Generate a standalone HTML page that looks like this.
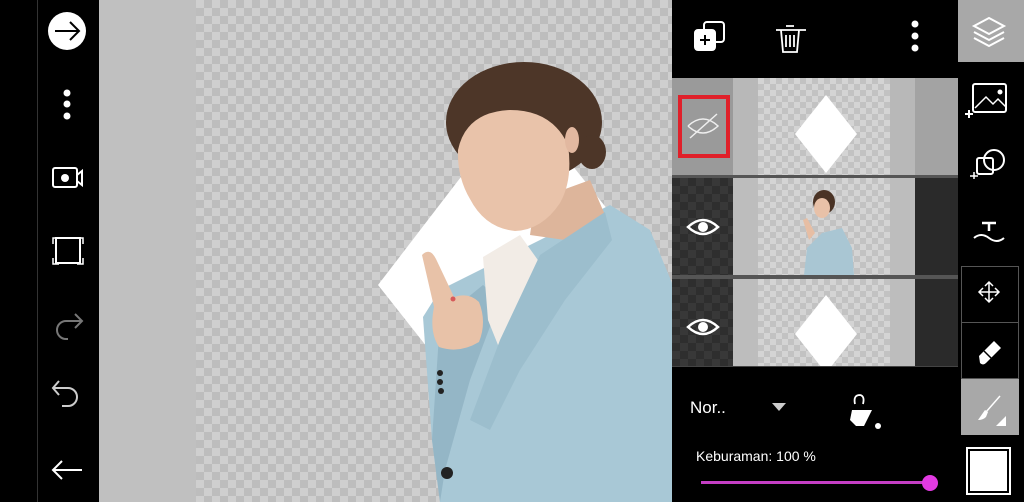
<!DOCTYPE html>
<html><head><meta charset="utf-8"><style>
*{margin:0;padding:0;box-sizing:border-box}
body{width:1024px;height:502px;background:#000;position:relative;overflow:hidden;font-family:"Liberation Sans",sans-serif}
.a{position:absolute}
.chk{background-color:#cfcfcf;background-image:linear-gradient(45deg,#bdbdbd 25%,transparent 25%,transparent 75%,#bdbdbd 75%),linear-gradient(45deg,#bdbdbd 25%,transparent 25%,transparent 75%,#bdbdbd 75%);background-size:16px 16px;background-position:0 0,8px 8px}
.chks{background-color:#d4d4d4;background-image:linear-gradient(45deg,#c2c2c2 25%,transparent 25%,transparent 75%,#c2c2c2 75%),linear-gradient(45deg,#c2c2c2 25%,transparent 25%,transparent 75%,#c2c2c2 75%);background-size:12px 12px;background-position:0 0,6px 6px}
.dchk{background-color:#2e2e2e;background-image:linear-gradient(45deg,#383838 25%,transparent 25%,transparent 75%,#383838 75%),linear-gradient(45deg,#383838 25%,transparent 25%,transparent 75%,#383838 75%);background-size:16px 16px;background-position:0 0,8px 8px}
svg{position:absolute}
</style></head><body>
<div class="a" style="left:37px;top:0;width:1px;height:502px;background:#333"></div>
<svg style="left:0;top:0" width="100" height="502" fill="none" stroke="#fff" stroke-width="2">
<circle cx="67" cy="31" r="19" fill="#fff" stroke="none"/>
<path d="M55 31H79M70 22l9 9-9 9" stroke="#000"/>
<g fill="#fff" stroke="none"><circle cx="67" cy="93" r="3.5"/><circle cx="67" cy="104" r="3.5"/><circle cx="67" cy="116" r="3.5"/></g>
<rect x="53" y="168" width="24" height="19" rx="2"/><circle cx="65" cy="178" r="4" fill="#fff" stroke="none"/><path d="M77 175l5-4v14l-5-4"/>
<rect x="56" y="238" width="24" height="25"/><path d="M53 244v-6h6M77 238h6v6M53 258v6h6M83 258v6h-6" stroke-width="1.5"/>
<path d="M81 321H66a9 9 0 0 0 0 18h2M75 314l7 7-7 7" stroke="#777"/>
<path d="M53 388H68a9 9 0 0 1 0 18h-6M59 381l-6 7 6 7" stroke="#ccc"/>
<path d="M82 470H54M62 461l-9 9 9 9"/>
</svg>
<div class="a" style="left:99px;top:0;width:97px;height:502px;background:#c0c0c0"></div>
<div class="a chk" style="left:196px;top:0;width:476px;height:502px"></div>
<svg style="left:0;top:0" width="672" height="502">
<polygon points="378,285 520,100 672,290 672,330 427,347" fill="#fff"/>
<polygon points="423,317 440,290 500,260 560,230 610,205 650,230 672,283 672,502 440,502 432,440" fill="#a8c8d6"/>
<polygon points="440,320 483,285 500,300 470,380 445,470 440,502 432,440" fill="#94b6c6"/>
<polygon points="535,200 590,180 605,215 565,240 530,235" fill="#ddb59b"/>
<polygon points="483,257 520,235 545,270 500,350 488,320" fill="#f2ece6"/>
<polygon points="540,255 605,212 612,240 565,300 520,370 490,430 470,420 500,340" fill="#9cbecd"/>
<ellipse cx="524" cy="122" rx="78" ry="60" fill="#4d3628"/>
<ellipse cx="592" cy="152" rx="14" ry="17" fill="#4d3628"/>
<path d="M458 150q8-38 52-40q42 0 58 35q5 35-8 58q-18 27-45 28q-30-3-45-32q-13-22-12-49z" fill="#e9c3aa"/>
<ellipse cx="572" cy="140" rx="7" ry="13" fill="#e2b8a0"/>
<path d="M422 255q8-8 14 4l18 38q15-5 25 5q8 20 0 40q-20 12-40 5q-10-15-5-40z" fill="#e8c2a8"/>
<circle cx="453" cy="299" r="2.5" fill="#d65a5a"/>
<g fill="#222"><circle cx="440" cy="373" r="3"/><circle cx="440" cy="382" r="3"/><circle cx="441" cy="391" r="3"/><ellipse cx="447" cy="473" rx="6" ry="6"/></g>
</svg>
<svg style="left:672px;top:0" width="286" height="78" fill="none" stroke="#fff" stroke-width="2">
<rect x="32" y="22" width="20" height="20" rx="3"/>
<rect x="23" y="30" width="20" height="20" rx="3" fill="#fff"/><path d="M33 35v10M28 40h10" stroke="#000"/>
<path d="M104 30h30M109 30l2 22h14l2-22M114 26h8M114 35v12M118 35v12M122 35v12" stroke-width="1.8"/>
<g fill="#fff" stroke="none"><circle cx="243" cy="24" r="3.5"/><circle cx="243" cy="36" r="3.5"/><circle cx="243" cy="48" r="3.5"/></g>
</svg>
<div class="a" style="left:672px;top:78px;width:286px;height:97px;background:#b8b8b8"></div>
<div class="a" style="left:672px;top:78px;width:61px;height:97px;background:#9a9a9a"></div>
<div class="a chks" style="left:758px;top:78px;width:132px;height:97px"></div>
<div class="a" style="left:915px;top:78px;width:43px;height:97px;background:#a3a3a3"></div>
<div class="a" style="left:678px;top:95px;width:52px;height:63px;border:4px solid #e0202a"></div>
<svg style="left:672px;top:78px" width="286" height="97"><path d="M16 48q15-14 30 0q-15 14-30 0M18 60l27-24" stroke="#eee" stroke-width="1.5" fill="none"/><polygon points="154,17 185,56 154,95 123,56" fill="#fff"/></svg>
<div class="a" style="left:672px;top:175px;width:286px;height:3px;background:#555"></div>
<div class="a dchk" style="left:672px;top:178px;width:61px;height:97px"></div>
<div class="a" style="left:733px;top:178px;width:182px;height:97px;background:#bdbdbd"></div>
<div class="a chks" style="left:758px;top:178px;width:132px;height:97px"></div>
<div class="a" style="left:915px;top:178px;width:43px;height:97px;background:#2a2a2a"></div>
<svg style="left:672px;top:178px" width="286" height="97">
<path d="M16 49q15-14 30 0q-15 14-30 0z" fill="none" stroke="#fff" stroke-width="2.5"/><circle cx="31" cy="49" r="5" fill="#fff"/>
<polygon points="132,97 135,70 150,55 170,50 180,70 182,97" fill="#a9c6d3"/><ellipse cx="152" cy="24" rx="11" ry="12" fill="#4a3325"/><ellipse cx="150" cy="30" rx="8" ry="10" fill="#e8c1a8"/><polygon points="131,42 135,40 143,55 137,62" fill="#e7bea4"/>
</svg>
<div class="a" style="left:672px;top:275px;width:286px;height:4px;background:#555"></div>
<div class="a dchk" style="left:672px;top:279px;width:61px;height:87px"></div>
<div class="a" style="left:733px;top:279px;width:182px;height:87px;background:#bdbdbd"></div>
<div class="a chks" style="left:758px;top:279px;width:132px;height:87px"></div>
<div class="a" style="left:915px;top:279px;width:43px;height:87px;background:#2a2a2a"></div>
<svg style="left:672px;top:279px" width="286" height="87">
<path d="M16 48q15-14 30 0q-15 14-30 0z" fill="none" stroke="#fff" stroke-width="2.5"/><circle cx="31" cy="48" r="5" fill="#fff"/>
<polygon points="154,16 185,55 154,94 123,55" fill="#fff"/></svg>
<div class="a" style="left:672px;top:366px;width:286px;height:1px;background:#444"></div>
<div class="a" style="left:690px;top:398px;color:#fff;font-size:17px">Nor..</div>
<svg style="left:672px;top:380px" width="286" height="122">
<polygon points="100,23 114,23 107,31" fill="#ccc"/>
<path d="M183 24q-2-9 5-9q5 1 3 9" stroke="#fff" stroke-width="1.8" fill="none"/>
<polygon points="180,30 200,30 192,46 184,46 178,40" fill="#fff"/><circle cx="206" cy="46" r="3" fill="#fff"/>
<rect x="29" y="101" width="229" height="3" fill="#c43ec4"/><circle cx="258" cy="103" r="8" fill="#e23ae2"/>
</svg>
<div class="a" style="left:696px;top:448px;color:#fff;font-size:14px">Keburaman: 100 %</div>
<div class="a" style="left:958px;top:0;width:66px;height:62px;background:#a8a8a8"></div>
<div class="a" style="left:961px;top:266px;width:58px;height:113px;border:1px solid #555"></div>
<div class="a" style="left:961px;top:322px;width:58px;height:1px;background:#555"></div>
<div class="a" style="left:961px;top:379px;width:58px;height:56px;background:#a8a8a8"></div>
<div class="a" style="left:966px;top:447px;width:45px;height:48px;border:2px solid #fff;background:#000"></div>
<div class="a" style="left:970px;top:451px;width:37px;height:40px;background:#fff"></div>
<svg style="left:958px;top:0" width="66" height="440" fill="none" stroke="#fff" stroke-width="2">
<path d="M31 18l15 8-15 8-15-8z"/><path d="M16 32l15 8 15-8M16 38l15 8 15-8"/>
<rect x="15" y="84" width="33" height="28" rx="2"/><path d="M17 108l11-11 7 7 5-5 8 8" stroke-width="1.5"/><circle cx="42" cy="92" r="1.5" fill="#fff"/><path d="M11 110v8M7 114h8"/>
<circle cx="36" cy="160" r="10"/><rect x="19" y="158" width="16" height="16" rx="2"/><path d="M16 172v7M12 176h8" stroke-width="1.5"/>
<path d="M24 223h14M31 223v8" stroke-width="2.5"/><path d="M16 238q7-6 15 0t15 0" />
<path d="M31 282v20M21 292h20M27 286l4-4 4 4M27 298l4 4 4-4M25 288l-4 4 4 4M37 288l4 4-4 4" stroke-width="1.5"/>
<path d="M21 356l15-15 7 7-15 15q-3 3-6 0z" fill="#fff" stroke="none"/><path d="M26 351l10 10" stroke="#000" stroke-width="1.5"/>
<path d="M42 396l-14 16" stroke-width="1.5"/><path d="M27 410l-7 10q5 0 8-3l2-5z" fill="#fff" stroke="none"/><polygon points="38,426 48,416 48,426" fill="#fff" stroke="none"/>
</svg>
</body></html>
